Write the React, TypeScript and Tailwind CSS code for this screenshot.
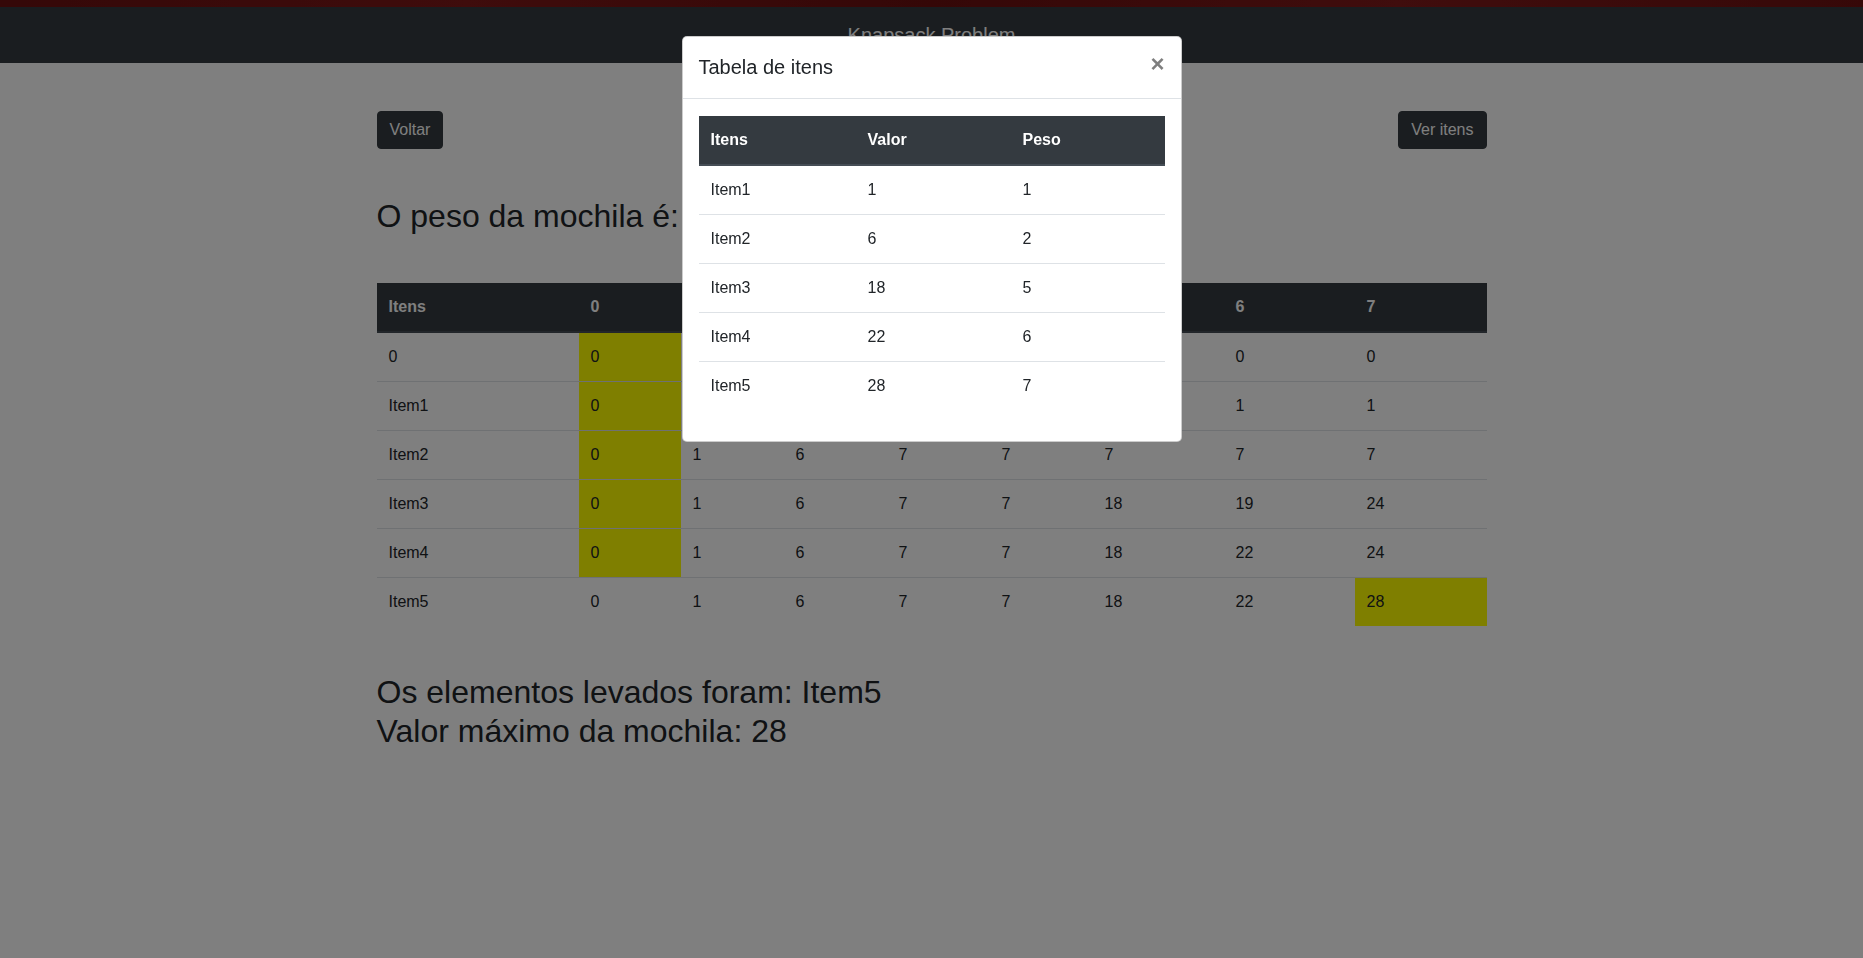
import React from 'react';

const tabela: number[][] = [
  [0, 0, 0, 0, 0, 0, 0, 0],
  [0, 1, 1, 1, 1, 1, 1, 1],
  [0, 1, 6, 7, 7, 7, 7, 7],
  [0, 1, 6, 7, 7, 18, 19, 24],
  [0, 1, 6, 7, 7, 18, 22, 24],
  [0, 1, 6, 7, 7, 18, 22, 28],
];

const nomes = ['0', 'Item1', 'Item2', 'Item3', 'Item4', 'Item5'];

const itens = [
  { nome: 'Item1', valor: 1, peso: 1 },
  { nome: 'Item2', valor: 6, peso: 2 },
  { nome: 'Item3', valor: 18, peso: 5 },
  { nome: 'Item4', valor: 22, peso: 6 },
  { nome: 'Item5', valor: 28, peso: 7 },
];

const colWidths = [202, 102, 103, 103, 103, 103, 131, 131, 132];
const modalCols = [157, 155, 154];

// celulas do caminho da solucao
const destacada = (r: number, c: number) => (c === 0 && r < 5) || (r === 5 && c === 7);

const App: React.FC = () => {
  return (
    <div className="relative h-screen overflow-hidden bg-white text-[#212529] font-['Liberation_Sans',Arial,sans-serif] text-base leading-6">
      {/* Navbar */}
      <div className="h-[7px] bg-[linear-gradient(90deg,#6a1010,#7e1818,#6a0f0f,#801a1a,#6d1111)]"></div>
      <div className="h-[56px] bg-[#343a40] flex items-center justify-center">
        <span className="text-[20px] leading-[30px] text-white">Knapsack Problem</span>
      </div>

      <div className="w-[1110px] mx-auto">
        <div className="mt-[48px] flex justify-between">
          <button className="bg-[#343a40] border border-[#343a40] text-white px-3 py-1.5 leading-6 rounded-[4px]">Voltar</button>
          <button className="bg-[#343a40] border border-[#343a40] text-white px-3 py-1.5 leading-6 rounded-[4px]">Ver itens</button>
        </div>

        <h2 className="mt-[48px] text-[32px] leading-[38.4px]">O peso da mochila é: 7</h2>

        <table className="mt-[48px] w-full table-fixed border-collapse">
          <colgroup>
            {colWidths.map((w, i) => (
              <col key={i} style={{ width: w }} />
            ))}
          </colgroup>
          <thead>
            <tr className="bg-[#343a40] text-white">
              <th className="p-3 text-left font-bold border-b-2 border-[#454d55]">Itens</th>
              {[0, 1, 2, 3, 4, 5, 6, 7].map(c => (
                <th key={c} className="p-3 text-left font-bold border-b-2 border-[#454d55]">{c}</th>
              ))}
            </tr>
          </thead>
          <tbody>
            {tabela.map((linha, r) => (
              <tr key={r}>
                <td className="p-3 border-t border-[#dee2e6]">{nomes[r]}</td>
                {linha.map((v, c) => (
                  <td
                    key={c}
                    className={destacada(r, c) ? 'p-3 border-t border-[#dee2e6] bg-[#ffff00]' : 'p-3 border-t border-[#dee2e6]'}
                  >
                    {v}
                  </td>
                ))}
              </tr>
            ))}
          </tbody>
        </table>

        <h2 className="mt-[47px] text-[32px] leading-[38.4px]">
          Os elementos levados foram: Item5
          <br />
          Valor máximo da mochila: 28
        </h2>
      </div>

      {/* Backdrop */}
      <div className="fixed inset-0 bg-black/50"></div>

      {/* Modal */}
      <div className="fixed inset-0 flex justify-center items-start">
        <div className="mt-[36px] w-[500px] bg-white border border-black/20 rounded-[5px]">
          <div className="flex items-start justify-between px-4 pt-[15px] pb-[16px] border-b border-[#dee2e6]">
            <h5 className="text-[20px] leading-[30px]">Tabela de itens</h5>
            <button className="-mx-4 -mt-[15px] -mb-4 px-4 pt-[15px] pb-4 text-[24px] leading-none font-bold text-black opacity-50">×</button>
          </div>
          <div className="px-4 pt-[17px] pb-[15px]">
            <table className="w-full table-fixed border-collapse mb-4">
              <colgroup>
                {modalCols.map((w, i) => (
                  <col key={i} style={{ width: w }} />
                ))}
              </colgroup>
              <thead>
                <tr className="bg-[#343a40] text-white">
                  <th className="p-3 text-left font-bold border-b-2 border-[#454d55]">Itens</th>
                  <th className="p-3 text-left font-bold border-b-2 border-[#454d55]">Valor</th>
                  <th className="p-3 text-left font-bold border-b-2 border-[#454d55]">Peso</th>
                </tr>
              </thead>
              <tbody>
                {itens.map((it, i) => (
                  <tr key={it.nome}>
                    <td className={i === 0 ? 'p-3' : 'p-3 border-t border-[#dee2e6]'}>{it.nome}</td>
                    <td className={i === 0 ? 'p-3' : 'p-3 border-t border-[#dee2e6]'}>{it.valor}</td>
                    <td className={i === 0 ? 'p-3' : 'p-3 border-t border-[#dee2e6]'}>{it.peso}</td>
                  </tr>
                ))}
              </tbody>
            </table>
          </div>
        </div>
      </div>
    </div>
  );
};

export default App;
